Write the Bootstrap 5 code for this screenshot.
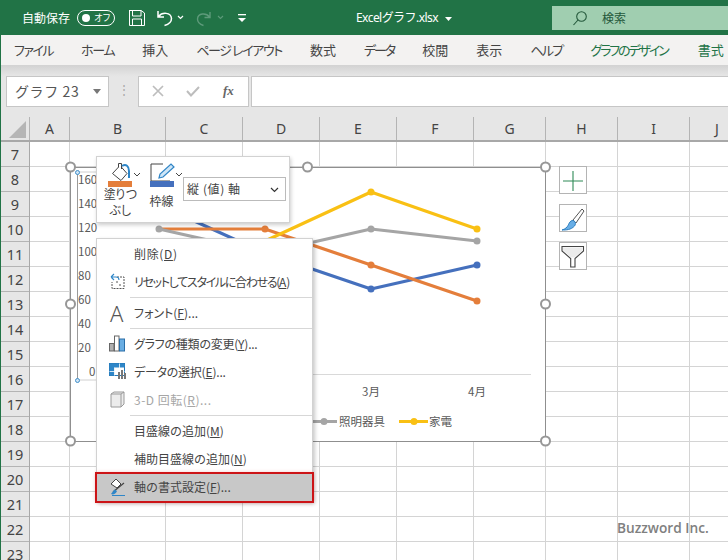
<!DOCTYPE html>
<html lang="ja">
<head>
<meta charset="utf-8">
<title>Excelグラフ</title>
<link href="https://cdn.jsdelivr.net/npm/bootstrap@5.3.0/dist/css/bootstrap.min.css" rel="stylesheet">
<style>
html,body{margin:0;height:560px;overflow:hidden;background:#fff}
body{font-family:"Noto Sans","Noto Sans CJK JP",sans-serif;color:#444}
.app{position:relative;width:728px;height:560px;overflow:hidden}
.jp{font-family:"Noto Sans CJK JP",sans-serif}
.titlebar{height:35px;background:#217346;color:#fff;font-size:12px;padding-left:22px}
.autosave{width:48px;letter-spacing:0}
.toggle{width:38px;height:16px;border:1px solid #fff;border-radius:8px;margin-left:7px;padding:0 4px;font-size:9px;line-height:1;letter-spacing:-1px}
.toggle i{width:8px;height:8px;border-radius:50%;background:#fff;display:block}
.qat{margin-left:13px}
.qatmore{margin-left:-2px}
.doc{position:absolute;left:356px;top:9px;font-size:12px;line-height:18px;letter-spacing:-.55px;white-space:nowrap}
.doc svg{margin-left:6px}
.search{position:absolute;left:552px;top:6px;width:176px;height:24px;background:#a0ceb0;color:#24583b;font-size:12px;padding-left:50px;line-height:24px}
.search svg{position:absolute;left:20px;top:4px}
.below{border-left:1px solid #217346}
.ribbon{height:30px;background:#f3f2f1;font-size:13px;color:#444;line-height:30px;position:relative;z-index:1;font-feature-settings:"palt";padding-left:13px;gap:28px;white-space:nowrap}
.ribbon .ctx{color:#217346}
.ls15{letter-spacing:-1.5px}.ls13{letter-spacing:-1.3px}.ls14{letter-spacing:-1.4px}.ls20{letter-spacing:-2px}.ls17{letter-spacing:-1.7px}.ls21{letter-spacing:-2.1px}
.ctxgap{margin-left:2px}
.fbar{height:52px;background:linear-gradient(#d2d2d2 0,#e4e4e4 10px,#e6e6e6 12px);padding:11px 0 0 5px;align-items:flex-start}
.fbox{height:31px;background:#fff;border:1px solid #c6c6c6;flex:none}
.namebox{width:103px;font-size:14px;line-height:29px;padding-left:8px;position:relative;color:#555;letter-spacing:.6px}
.namebox::after{content:"";position:absolute;right:7px;top:12px;border:4px solid transparent;border-top:5px solid #777;border-bottom:0}
.dots{width:29px;color:#a8a8a8;font-size:12px;line-height:28px;text-align:center;flex:none}
.fxbox{width:111px;position:relative}
.fxbox svg{position:absolute;top:7px}
.fxbox .xm{left:12px}.fxbox .ck{left:47px}
.fxbox em{position:absolute;left:84px;top:2px;font:italic bold 13px "Liberation Serif",serif;line-height:24px;color:#666}
.inputbox{flex:1;margin-left:2px;border-right:0}
.colhead{height:25px;background:#e6e6e6;border-bottom:2px solid #a8a8a8;font-size:14px;line-height:23px;text-align:center;color:#444}
.hc{flex:none;border-right:1px solid #b4b4b4;height:23px;margin-top:0}
.corner{width:29px;position:relative}
.corner::after{content:"";position:absolute;left:8px;top:4px;width:17px;height:17px;background:#b5b5b5;clip-path:polygon(100% 0,100% 100%,0 100%)}
.w40{width:40px}.w96{width:96px}.w77{width:77px}.w72{width:72px}
.sheetbody{height:418px}
.rownums{width:29px;flex:none;background:#e6e6e6;border-right:1px solid #a8a8a8}
.rn{height:25px;border-bottom:1px solid #b4b4b4;text-align:center;font-size:14.5px;line-height:24px;color:#444}
.cells{flex:1;background:repeating-linear-gradient(to bottom,#fff 0,#fff 24px,#d4d4d4 24px,#d4d4d4 25px)}
.vc{flex:none;height:100%;border-right:1px solid #d4d4d4}
.chartbox{position:absolute;left:70px;top:167px;width:476px;height:275px;background:#fff;border:1px solid #8f8f8f}
.overlay{position:absolute;left:0;top:0;pointer-events:none}
.overlay text{font-family:"Noto Sans CJK JP",sans-serif;font-size:11.5px;fill:#595959}
.mini{position:absolute;left:96px;top:156px;width:194px;height:67px;background:#fff;border:1px solid #d2d2d2;box-shadow:1px 2px 4px rgba(0,0,0,.2);font-size:12px;color:#444}
.mini svg{position:absolute}
.m-bucket{left:11px;top:6px}.m-bar1{left:11px;top:24px}.m-chev1{left:36px;top:15px}
.m-pen{left:53px;top:6px}.m-bar2{left:53px;top:24px}.m-chev2{left:78px;top:15px}
.mlabel{position:absolute;text-align:center;line-height:16px;white-space:nowrap}
.m-fill{left:5px;top:29px;width:36px;letter-spacing:-1.2px}
.m-line{left:52px;top:36px;width:25px}
.axisselect{position:absolute;left:86px;top:20px;width:103px;height:24px;border:1px solid #bbb;padding:0 0 0 3px;font-size:12px;line-height:21px;letter-spacing:.6px;color:#444}
.axisselect svg{right:6px;top:9px}
.ctxmenu{display:block;position:absolute;left:96px;top:238px;width:217px;height:264px;padding:1px 0 0;margin:0;background:#fff;border:1px solid #d2d2d2;border-radius:0;box-shadow:2px 2px 4px rgba(0,0,0,.22);font-size:12px;min-width:0}
.ctxmenu .dropdown-item{height:28px;line-height:28px;padding:0 0 0 37px;color:#444;position:relative;white-space:nowrap;border-radius:0;background:transparent}
.ctxmenu .dropdown-item svg{position:absolute;left:12px;top:5px}
.ctxmenu .dropdown-item .i-13{left:13px}
.ctxmenu .dropdown-item .i-14{left:14px;top:4px}
.ctxmenu .dropdown-divider{margin:1px 0 1px 33px;height:1px;border-top:1px solid #d7d7d7;opacity:1;width:182px}
.ctxmenu .dropdown-item.off{color:#a6a6a6}
.ctxmenu .dropdown-item.pick{background:#c8c8c8;outline:2px solid #cc1417;outline-offset:-1px;box-shadow:0 0 4px rgba(204,20,23,.35);margin:0 -1px;padding-left:38px;height:29px;width:217px}
.bigA{position:absolute;left:13px;top:1px;font:300 22px/27px "Noto Sans",sans-serif;color:#555}
.kn{font-feature-settings:"palt"}
.kr{letter-spacing:-1.3px}
.kt{letter-spacing:-.25px}
.kr u,.kt u{letter-spacing:0}
.sp1{letter-spacing:.65px}
.sp2{letter-spacing:.5px}
.sidebtn{position:absolute;left:559px;width:28px;height:28px;background:#fff;border:1px solid #b4b4b4}
.sb1{top:166px}.sb2{top:204px}.sb3{top:242px}
.watermark{position:absolute;left:617px;top:517px;font:600 13.7px/22px "Open Sans",sans-serif;color:#808080;white-space:nowrap}
.cursor{position:absolute;left:281px;top:481px}
</style>
</head>
<body>
<div class="app">
  <header class="titlebar d-flex align-items-center">
    <span class="autosave jp">自動保存</span>
    <span class="toggle d-flex align-items-center justify-content-between jp"><i></i><span>オフ</span></span>
    <svg class="qat" width="110" height="22" viewBox="0 0 110 22" fill="none" stroke="#fff">
      <path d="M1 3.500H13L16.500 6V18.500H1.500V3.500ZM4.500 3.500V9H13V3.500M4.500 18.500V12H13.500V18.500" stroke-width="1"/>
      <path d="M30 4V10H36M30.500 9.500C34 5 43 5 43.500 11.500C43.500 15.500 40 17.500 36.500 18.500" stroke-width="1.500"/>
      <path d="M50 9L52.500 11.500L55 9" stroke-width="1.200"/>
      <path d="M82 5V10.500H76.500M81.500 10C78 5.500 70 6 69.500 12C69.500 15.500 72 17.500 75.500 18.500" stroke="#5d9a7a" stroke-width="1.400"/>
      <path d="M90 9L92.500 11.500L95 9" stroke="#5d9a7a" stroke-width="1.100"/>
    </svg>
    <svg class="qatmore" width="14" height="12" viewBox="0 0 14 12" fill="#fff"><rect x="2" y="2" width="8" height="1.300"/><path d="M2 6H10L6 10Z"/></svg>
    <span class="doc">Excelグラフ.xlsx<svg width="9" height="6" viewBox="0 0 9 6" class="align-middle"><path d="M1 1H8L4.500 5Z" fill="#fff"/></svg></span>
    <div class="search jp"><svg width="16" height="16" viewBox="0 0 16 16" fill="none" stroke="#24583b" stroke-width="1.100"><circle cx="9.500" cy="6.500" r="4.800"/><path d="M6 10L1.500 15"/></svg>検索</div>
  </header>
  <div class="below">
    <nav class="ribbon jp d-flex">
      <span class="ls15">ファイル</span>
      <span class="ls13">ホーム</span>
      <span>挿入</span>
      <span class="ls14">ページ レイアウト</span>
      <span>数式</span>
      <span class="ls20">データ</span>
      <span>校閲</span>
      <span>表示</span>
      <span class="ls17">ヘルプ</span>
      <span class="ctx ls21">グラフのデザイン</span>
      <span class="ctx ctxgap">書式</span>
    </nav>
    <div class="fbar d-flex">
      <div class="fbox namebox jp">グラフ 23</div>
      <div class="dots">⋮</div>
      <div class="fbox fxbox">
        <svg class="xm" width="14" height="14" viewBox="0 0 14 14" stroke="#bdbdbd" stroke-width="1.700"><path d="M2 2L12 12M12 2L2 12"/></svg>
        <svg class="ck" width="14" height="14" viewBox="0 0 14 14" fill="none" stroke="#bdbdbd" stroke-width="2"><path d="M1 7L5 11.500L13 3"/></svg>
        <em>fx</em>
      </div>
      <div class="fbox inputbox"></div>
    </div>
    <div class="colhead d-flex">
      <div class="hc corner"></div>
      <div class="hc w40">A</div><div class="hc w96">B</div><div class="hc w77">C</div><div class="hc w77">D</div><div class="hc w77">E</div><div class="hc w77">F</div><div class="hc w72">G</div><div class="hc w72">H</div><div class="hc w72">I</div><div class="flex-grow-1 ps-3">J</div>
    </div>
    <div class="sheetbody d-flex">
      <div class="rownums">
        <div class="rn">7</div><div class="rn">8</div><div class="rn">9</div><div class="rn">10</div><div class="rn">11</div><div class="rn">12</div><div class="rn">13</div><div class="rn">14</div><div class="rn">15</div><div class="rn">16</div><div class="rn">17</div><div class="rn">18</div><div class="rn">19</div><div class="rn">20</div><div class="rn">21</div><div class="rn">22</div><div class="rn">23</div>
      </div>
      <div class="cells d-flex">
        <div class="vc w40"></div><div class="vc w96"></div><div class="vc w77"></div><div class="vc w77"></div><div class="vc w77"></div><div class="vc w77"></div><div class="vc w72"></div><div class="vc w72"></div><div class="vc w72"></div>
      </div>
    </div>
  </div>

  <div class="chartbox"></div>
  <svg class="overlay" width="728" height="560" viewBox="0 0 728 560" fill="none">
    <path d="M77.500 172V380" stroke="#9a9a9a"/>
    <path d="M77.500 172H96M77.500 380H96" stroke="#d0d0d0"/>
    <g>
      <text x="78" y="184">160</text><text x="78" y="208">140</text><text x="78" y="232">120</text><text x="78" y="256">100</text>
      <text x="78" y="280">80</text><text x="78" y="304">60</text><text x="78" y="328">40</text><text x="78" y="352">20</text><text x="89" y="376">0</text>
    </g>
    <path d="M97 374.500H531" stroke="#d9d9d9"/>
    <g stroke-width="3.200" stroke-linejoin="round">
      <path d="M159 205L265 253L371 289L477 265" stroke="#4570bd"/>
      <path d="M159 229L265 229L371 265L477 301" stroke="#e47e3b"/>
      <path d="M159 229L265 253L371 229L477 241" stroke="#a5a5a5"/>
      <path d="M159 265L265 241L371 192L477 229" stroke="#f9c014"/>
    </g>
    <g fill="#4570bd"><circle cx="371" cy="289" r="3.500"/><circle cx="477" cy="265" r="3.500"/></g>
    <g fill="#e47e3b"><circle cx="265" cy="229" r="3.500"/><circle cx="371" cy="265" r="3.500"/><circle cx="477" cy="301" r="3.500"/></g>
    <g fill="#a5a5a5"><circle cx="159" cy="229" r="3.500"/><circle cx="371" cy="229" r="3.500"/><circle cx="477" cy="241" r="3.500"/></g>
    <g fill="#f9c014"><circle cx="371" cy="192" r="3.500"/><circle cx="477" cy="229" r="3.500"/></g>
    <text x="362" y="396">3月</text><text x="468" y="396">4月</text>
    <path d="M300 421.500H337" stroke="#a5a5a5" stroke-width="3"/><circle cx="324" cy="421.500" r="3.500" fill="#a5a5a5"/>
    <text x="339" y="425.500">照明器具</text>
    <path d="M399 421.500H428" stroke="#f9c014" stroke-width="3"/><circle cx="414" cy="421.500" r="3.500" fill="#f9c014"/>
    <text x="429" y="425.500">家電</text>
    <g fill="#fff" stroke="#979797" stroke-width="2">
      <circle cx="70.500" cy="167" r="4.500"/><circle cx="307.500" cy="167" r="4.500"/><circle cx="545.500" cy="167" r="4.500"/>
      <circle cx="70.500" cy="304" r="4.500"/><circle cx="545.500" cy="304" r="4.500"/>
      <circle cx="70.500" cy="441" r="4.500"/><circle cx="307.500" cy="441" r="4.500"/><circle cx="545.500" cy="441" r="4.500"/>
    </g>
    <g fill="#cfe4f5" stroke="#3f8fc9" stroke-width="1"><circle cx="77.500" cy="172.500" r="2"/><circle cx="77.500" cy="380.500" r="2"/></g>
  </svg>

  <div class="mini jp">
    <svg class="m-bucket" width="30" height="20" viewBox="0 0 30 20" fill="none">
      <path d="M4.500 10.500L12 2.500L19 10.500L13 17.500Z" fill="#fff" stroke="#444" stroke-width="1"/><path d="M10.500 4.500V.5H13.500V6" fill="#fff" stroke="#444" stroke-width="1"/>
      <path d="M14 3C18 .5 21 3 21 8V15" stroke="#2e86c8" stroke-width="2"/>
    </svg>
    <svg class="m-bar1" width="24" height="6"><rect width="24" height="6" fill="#e47e3b"/></svg>
    <svg class="m-chev1" width="8" height="6" fill="none" stroke="#444"><path d="M1 1L4 4L7 1"/></svg>
    <div class="mlabel m-fill">塗りつ<br>ぶし</div>
    <svg class="m-pen" width="26" height="20" viewBox="0 0 26 20" fill="none">
      <path d="M1 1H13M1 1V18H20" stroke="#444"/>
      <path d="M9 15L10 11L21 1L24 4L13 14Z" fill="#cfe6f7" stroke="#3085c6" stroke-width="1.200"/>
    </svg>
    <svg class="m-bar2" width="24" height="6"><rect width="24" height="6" fill="#4570bd"/></svg>
    <svg class="m-chev2" width="8" height="6" fill="none" stroke="#444"><path d="M1 1L4 4L7 1"/></svg>
    <div class="mlabel m-line">枠線</div>
    <div class="axisselect">縦 (値) 軸<svg width="9" height="6" fill="none" stroke="#333" stroke-width="1.200"><path d="M1 1L4.500 4.500L8 1"/></svg></div>
  </div>

  <div class="dropdown-menu ctxmenu jp">
    <div class="dropdown-item sp1">削除(<u>D</u>)</div>
    <div class="dropdown-item kn kr"><svg class="i-13" width="16" height="17" viewBox="0 0 16 17" fill="none"><path d="M7 4H14V15.500H2V9" stroke="#555" stroke-dasharray="2 1"/><path d="M1 4L4 1M1 4L4 7M1 4H6C8 4 9 5 9 7" stroke="#2e86c8" stroke-width="1.100"/><path d="M6 9H8M9 12H11" stroke="#555"/></svg>リセットしてスタイルに合わせる(<u>A</u>)</div>
    <hr class="dropdown-divider">
    <div class="dropdown-item kn"><span class="bigA">A</span>フォント(<u>F</u>)...</div>
    <hr class="dropdown-divider">
    <div class="dropdown-item kn kt"><svg width="17" height="17" viewBox="0 0 17 17"><rect x=".5" y="8.500" width="4.500" height="7.500" fill="#b0b0b0" stroke="#666"/><rect x="5.500" y="1" width="4.500" height="15" fill="#fff" stroke="#666"/><rect x="10.500" y="4" width="5" height="12" fill="#6aaee3" stroke="#2a6ea8"/></svg>グラフの種類の変更(<u>Y</u>)...</div>
    <div class="dropdown-item kn kt"><svg width="18" height="18" viewBox="0 0 18 18"><rect x=".5" y=".5" width="15" height="12" fill="#fff" stroke="#2478b8"/><path d="M.5 .5H15.500V4.500H.5ZM.5 4.500H5.500V12.500H.5Z" fill="#2e86c8"/><path d="M5.500 4.500V12.500M10.500 .5V12.500M.5 8.500H15.500" stroke="#fff" stroke-width=".8"/><rect x="9" y="9" width="2" height="7" fill="#777"/><rect x="12" y="7" width="2" height="9" fill="#777"/><rect x="15" y="10" width="2" height="6" fill="#777"/></svg>データの選択(<u>E</u>)...</div>
    <div class="dropdown-item off sp2"><svg class="i-13" width="15" height="17" viewBox="0 0 15 17" fill="none" stroke="#9a9a9a"><path d="M1 3L4 1H14V13L11 16H1Z" fill="#ececec"/><path d="M1 3H11V16M11 3L14 1"/></svg>3-D 回転(<u>R</u>)...</div>
    <hr class="dropdown-divider">
    <div class="dropdown-item">目盛線の追加(<u>M</u>)</div>
    <div class="dropdown-item">補助目盛線の追加(<u>N</u>)</div>
    <div class="dropdown-item pick"><svg class="i-14" width="18" height="20" viewBox="0 0 18 20" fill="none"><path d="M1 7L6 2L11 7L7 11Z" fill="#fff" stroke="#444"/><path d="M3 15L14 6" stroke="#444" stroke-width="1.200"/><path d="M1 17C3 18 6 17 7 14L4.500 12.500C3 14 2 16 1 17Z" fill="#2e86c8"/><path d="M2 18.500H15" stroke="#2e86c8"/></svg>軸の書式設定(<u>F</u>)...</div>
  </div>

  <div class="sidebtn sb1"><svg width="26" height="26" viewBox="0 0 26 26" stroke="#2f8a57" stroke-width="1.100"><path d="M13 3V23M3 13H23"/></svg></div>
  <div class="sidebtn sb2"><svg width="26" height="26" viewBox="0 0 26 26" fill="none"><path d="M13 14L22 3L24 5L16 17Z" fill="#fff" stroke="#555"/><path d="M2 24C6 24 11 24 14.500 20C17 17 14 13 11 15C8 17 9 22 2 24Z" fill="#68aee6" stroke="#2d7fc0"/></svg></div>
  <div class="sidebtn sb3"><svg width="26" height="26" viewBox="0 0 26 26" fill="none"><path d="M2 2.500H23.500V7L15 14.500V23H10.700V14.500L2 7Z" fill="#fff" stroke="#444" stroke-width="1.100"/><path d="M3 3.500H22.500V6.500L14.500 13.500H11L3 6.500Z" fill="#ebebeb"/></svg></div>

  <div class="watermark">Buzzword Inc.</div>
  <svg class="cursor" width="15" height="21" viewBox="0 0 15 21"><path d="M1.500 1V17L5.500 13.500L8 19.500L10.500 18.500L8 12.500H13Z" fill="#fff" stroke="#222"/></svg>
</div>
</body>
</html>
